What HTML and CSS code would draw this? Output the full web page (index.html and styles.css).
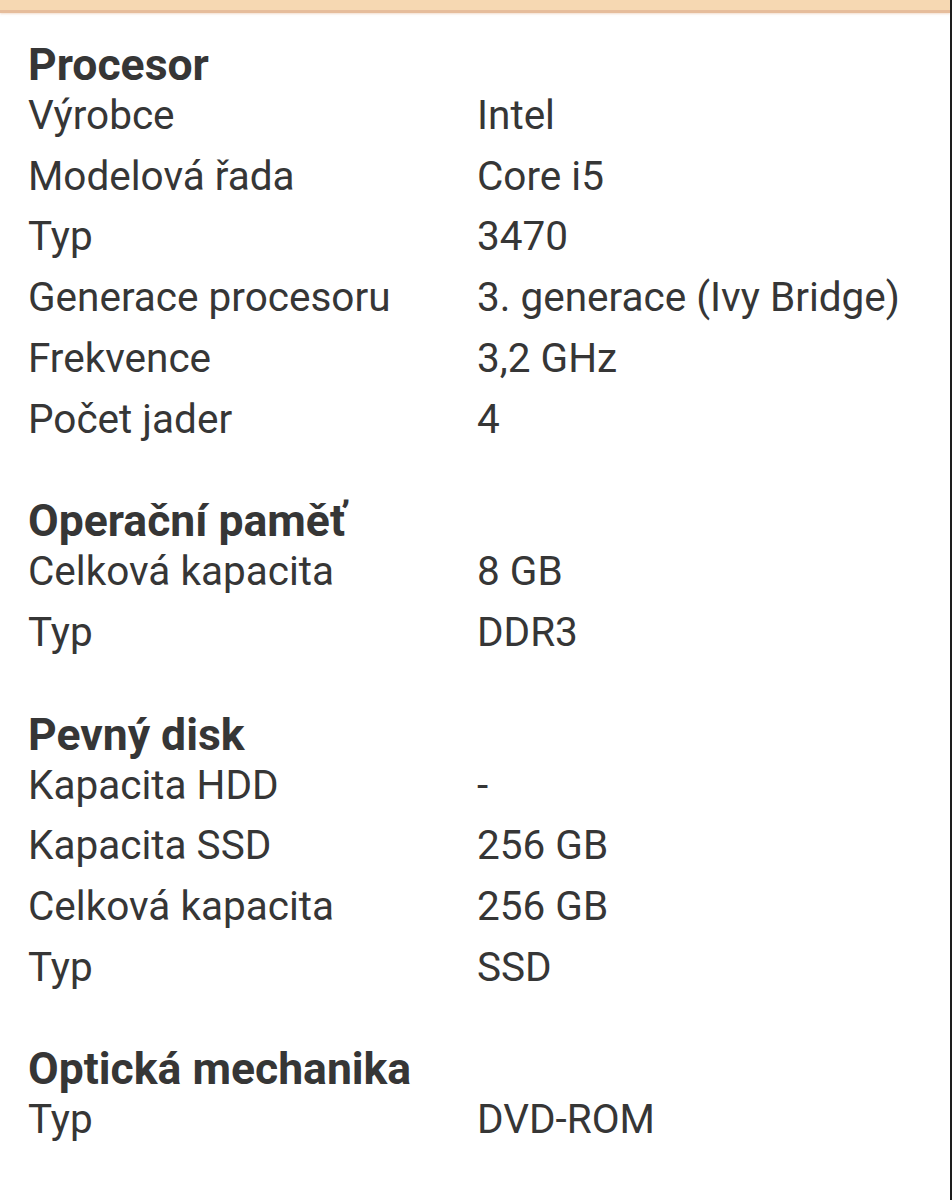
FILE: index.html
```html
<!DOCTYPE html>
<html lang="cs">
<head>
<meta charset="utf-8">
<title>Parametry</title>
<link rel="stylesheet" href="styles.css">
</head>
<body>
<div class="topbar"></div>
<main class="specs">
  <section class="group">
    <h2 class="group-title">Procesor</h2>
    <dl class="rows">
      <dt>Výrobce</dt><dd>Intel</dd>
      <dt>Modelová řada</dt><dd>Core i5</dd>
      <dt>Typ</dt><dd>3470</dd>
      <dt>Generace procesoru</dt><dd>3. generace (Ivy Bridge)</dd>
      <dt>Frekvence</dt><dd>3,2 GHz</dd>
      <dt>Počet jader</dt><dd>4</dd>
    </dl>
  </section>
  <section class="group">
    <h2 class="group-title">Operační paměť</h2>
    <dl class="rows">
      <dt>Celková kapacita</dt><dd>8 GB</dd>
      <dt>Typ</dt><dd>DDR3</dd>
    </dl>
  </section>
  <section class="group">
    <h2 class="group-title">Pevný disk</h2>
    <dl class="rows">
      <dt>Kapacita HDD</dt><dd>-</dd>
      <dt>Kapacita SSD</dt><dd>256 GB</dd>
      <dt>Celková kapacita</dt><dd>256 GB</dd>
      <dt>Typ</dt><dd>SSD</dd>
    </dl>
  </section>
  <section class="group">
    <h2 class="group-title">Optická mechanika</h2>
    <dl class="rows">
      <dt>Typ</dt><dd>DVD-ROM</dd>
    </dl>
  </section>
</main>
</body>
</html>
```
FILE: styles.css
```css
html, body {
  margin: 0;
  padding: 0;
  background: #ffffff;
}
body {
  font-family: Roboto, "Noto Sans", sans-serif;
  color: #363636;
  border-right: 2px solid #1e1e1e;
  min-height: 1200px;
  box-sizing: border-box;
}
.topbar {
  height: 10px;
  background: #f6d8b2;
  border-bottom: 3px solid #e6bd9c;
  box-shadow: 0 1px 2px rgba(230, 189, 156, 0.5);
}
.specs {
  padding: 33px 0 0 28px;
}
.group {
  margin-bottom: 53px;
}
.group-title {
  margin: 0;
  font-size: 44.5px;
  font-weight: 700;
  line-height: 39px;
}
.rows {
  margin: 0;
  display: grid;
  grid-template-columns: 449px 1fr;
  font-size: 40.5px;
  line-height: 60.7px;
}
.rows dt, .rows dd {
  margin: 0;
}
```
